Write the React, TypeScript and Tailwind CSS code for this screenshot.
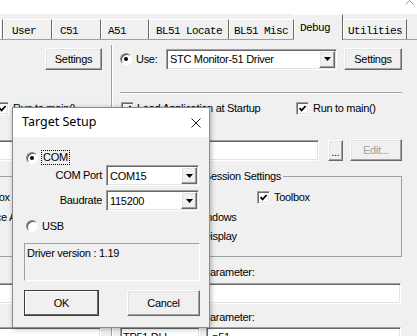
import React from 'react';

const raised =
  'border border-t-white border-l-white border-r-[#696969] border-b-[#696969] bg-[#f0f0f0] shadow-[inset_-1px_-1px_0_#a0a0a0,inset_1px_1px_0_#e3e3e3]';
const sunken =
  'border border-t-[#a0a0a0] border-l-[#a0a0a0] border-r-white border-b-white bg-white shadow-[inset_1px_1px_0_#696969,inset_-1px_-1px_0_#e3e3e3]';

const Check = () => (
  <span className={`flex h-[13px] w-[13px] shrink-0 items-center justify-center ${sunken}`}>
    <svg width="9" height="9" viewBox="0 0 9 9">
      <path d="M1.5 4.2 L3.6 6.4 L7.6 2" stroke="#000" strokeWidth="1.7" fill="none" />
    </svg>
  </span>
);

const Radio: React.FC<{ on?: boolean }> = ({ on }) => (
  <span className="flex h-[12px] w-[12px] shrink-0 items-center justify-center rounded-full border border-t-[#8a8a8a] border-l-[#8a8a8a] border-r-white border-b-white bg-white shadow-[inset_1px_1px_0_#505050]">
    {on && <span className="h-[4px] w-[4px] rounded-full bg-black" />}
  </span>
);

const Arrow = () => (
  <span className={`mr-[1px] flex h-[17px] w-[16px] shrink-0 items-center justify-center ${raised}`}>
    <svg width="7" height="4" viewBox="0 0 7 4">
      <path d="M0 0 H7 L3.5 4 Z" fill="#000" />
    </svg>
  </span>
);

const Combo: React.FC<{ value: string; width: string }> = ({ value, width }) => (
  <div className={`flex h-[21px] items-center ${width} ${sunken}`}>
    <span className="flex-1 pl-[3px] leading-[14px]">{value}</span>
    <Arrow />
  </div>
);

const tabs = [
  { label: '', cls: 'w-[3px]' },
  { label: 'User', cls: 'w-[49px] pl-[8px]' },
  { label: 'C51', cls: 'w-[49px] pl-[7px]' },
  { label: 'A51', cls: 'w-[48px] pl-[6px]' },
  { label: 'BL51 Locate', cls: 'w-[80px] pl-[6px]' },
  { label: 'BL51 Misc', cls: 'w-[65px] pl-[4px]' },
  { label: 'Debug', cls: 'w-[49px] pl-[5px]', active: true },
  { label: 'Utilities', cls: 'w-[64px] pl-[4px]' },
];

const TabStrip = () => (
  <div className="flex h-[26px] items-end border-b border-[#a0a0a0] font-['Liberation_Mono',monospace] text-[11px] tracking-[-0.6px]">
    {tabs.map((t, i) =>
      t.active ? (
        <div
          key={i}
          className={`relative -mb-px h-[26px] shrink-0 border-x border-t border-t-white border-l-white border-r-[#696969] bg-[#f0f0f0] pt-[7px] leading-[12px] ${t.cls}`}
        >
          {t.label}
        </div>
      ) : (
        <div
          key={i}
          className={`h-[20px] shrink-0 border-x border-t border-t-white border-l-white border-r-[#696969] pt-[5px] leading-[12px] ${t.cls}`}
        >
          {t.label}
        </div>
      )
    )}
  </div>
);

const DebugColumn: React.FC<{ sim?: boolean }> = ({ sim }) => (
  <div className={sim ? '-ml-[184px] w-[286px] shrink-0' : 'w-[286px] shrink-0'}>
    {sim ? (
      <div className="mt-[8px] flex h-[22px] items-center pl-[4px]">
        <Radio />
        <span className="ml-[4px]">Use Simulator</span>
        <button className={`ml-auto h-[22px] w-[57px] ${raised}`}>Settings</button>
      </div>
    ) : (
      <div className="mt-[8px] flex h-[22px] items-center pl-[4px]">
        <Radio on />
        <span className="ml-[4px] w-[30px]">Use:</span>
        <div className={`flex h-[21px] w-[171px] items-center ${sunken}`}>
          <span className="flex-1 pl-[3px] leading-[14px]">STC Monitor-51 Driver</span>
          <Arrow />
        </div>
        <button className={`ml-[7px] h-[22px] w-[58px] ${raised}`}>Settings</button>
      </div>
    )}

    {sim ? (
      <div className="mt-[22px] h-[2px]" />
    ) : (
      <div className="mt-[22px] ml-[4px] h-[2px] border-t border-b border-t-[#a0a0a0] border-b-white" />
    )}

    <div className="mt-[8px] flex h-[13px] items-center pl-[5px]">
      <div className="flex w-[175px] items-center gap-[3px]">
        <Check />
        <span className="leading-[13px]">Load Application at Startup</span>
      </div>
      <div className="flex items-center gap-[4px]">
        <Check />
        <span className="leading-[13px]">Run to main()</span>
      </div>
    </div>

    <div className="mt-[4px] h-[14px] pl-[4px] leading-[14px]">Initialization File:</div>

    <div className="mt-[7px] flex h-[21px] items-start pl-[4px]">
      <div className={`h-[21px] w-[199px] ${sunken}`} />
      <button className={`ml-[9px] h-[21px] w-[15px] pt-[3px] leading-[12px] ${raised}`}>...</button>
      <button className={`-mt-px ml-[7px] h-[22px] w-[52px] text-[#a0a0a0] ${raised}`}>Edit...</button>
    </div>

    <fieldset className="mt-[8px] ml-[9px] h-[88px] w-[277px] border border-[#a0a0a0]">
      <legend className="ml-[3px] px-[2px] leading-[14px]">Restore Debug Session Settings</legend>
      <div className="mt-[8px] flex h-[13px] items-center pl-[9px]">
        <div className="flex w-[122px] items-center gap-[4px]">
          <Check />
          <span className="leading-[13px]">Breakpoints</span>
        </div>
        <div className="flex items-center gap-[4px]">
          <Check />
          <span className="leading-[13px]">Toolbox</span>
        </div>
      </div>
      <div className={sim ? 'mt-[7px] flex h-[13px] items-center gap-[4px] pl-[17px]' : 'mt-[7px] flex h-[13px] items-center gap-[4px] pl-[19px]'}>
        <Check />
        <span className="leading-[13px]">{sim ? 'Watch Windows & Performance Analyzer' : 'Watch Windows'}</span>
      </div>
      <div className={sim ? 'mt-[6px] flex h-[13px] items-center gap-[4px] pl-[17px]' : 'mt-[6px] flex h-[13px] items-center gap-[4px] pl-[19px]'}>
        <Check />
        <span className="leading-[13px]">Memory Display</span>
      </div>
    </fieldset>

    <div className="mt-[8px] flex h-[14px] pl-[4px] leading-[14px]">
      <span className="w-[83px]">{sim ? 'CPU DLL:' : 'Driver DLL:'}</span>
      <span>Parameter:</span>
    </div>
    <div className="mt-[4px] flex pl-[4px]">
      <div className={`h-[21px] w-[80px] pl-[2px] leading-[19px] ${sunken}`}>S8051.DLL</div>
      <div className={`ml-[6px] h-[21px] w-[195px] ${sunken}`} />
    </div>

    <div className="mt-[6px] flex h-[14px] pl-[4px] leading-[14px]">
      <span className="w-[83px]">Dialog DLL:</span>
      <span>Parameter:</span>
    </div>
    <div className="mt-[3px] flex pl-[4px]">
      <div className={`h-[21px] w-[80px] pl-[2px] leading-[19px] ${sunken}`}>{sim ? 'DP51.DLL' : 'TP51.DLL'}</div>
      <div className={`ml-[6px] h-[21px] w-[195px] pl-[2px] leading-[19px] ${sunken}`}>-p51</div>
    </div>
  </div>
);

const TargetSetup = () => (
  <div className="absolute left-[12px] top-[107px] flex h-[221px] w-[198px] flex-col border border-[#8c8c8c] bg-[#f0f0f0] shadow-[1px_1px_5px_rgba(0,0,0,0.3)]">
    <div className="flex h-[29px] shrink-0 items-center bg-white pl-[9px] font-['Noto_Sans',sans-serif] text-[12.5px] tracking-normal">
      <span>Target Setup</span>
      <svg className="mr-[8px] ml-auto" width="10" height="10" viewBox="0 0 10 10">
        <path d="M0.5 0.5 L9.5 9.5 M9.5 0.5 L0.5 9.5" stroke="#222" strokeWidth="1" />
      </svg>
    </div>

    <div className="flex flex-col pl-[11px]">
      <div className="mt-[13px] flex h-[15px] items-center">
        <span className="ml-[2px]">
          <Radio on />
        </span>
        <span className="ml-[3px] h-[15px] border border-dotted border-black px-[1px] leading-[13px]">COM</span>
      </div>

      <div className="flex h-[21px] items-center">
        <span className="w-[78px] text-right">COM Port</span>
        <span className="ml-[4px]">
          <Combo value="COM15" width="w-[93px]" />
        </span>
      </div>

      <div className="mt-[4px] flex h-[21px] items-center">
        <span className="w-[78px] text-right">Baudrate</span>
        <span className="ml-[4px]">
          <Combo value="115200" width="w-[93px]" />
        </span>
      </div>

      <div className="mt-[8px] flex h-[14px] items-center">
        <span className="ml-[2px]">
          <Radio />
        </span>
        <span className="ml-[4px] leading-[14px]">USB</span>
      </div>

      <div className="mt-[10px] h-[38px] w-[176px] border border-t-[#a0a0a0] border-l-[#a0a0a0] border-r-white border-b-white pl-[2px] pt-[2px] leading-[14px]">
        Driver version : 1.19
      </div>

      <div className="mt-[9px] flex">
        <button className="h-[26px] w-[75px] border border-[#3c3c3c] bg-[#f0f0f0] shadow-[inset_-1px_-1px_0_#696969,inset_1px_1px_0_#ffffff]">
          OK
        </button>
        <button className={`ml-[28px] h-[26px] w-[73px] ${raised}`}>Cancel</button>
      </div>
    </div>
  </div>
);

export default function App() {
  return (
    <div className="relative h-[336px] w-[417px] overflow-hidden whitespace-nowrap bg-[#f0f0f0] font-['Liberation_Sans',Arial,sans-serif] text-[11px] tracking-[-0.3px] text-black">
      <div className="relative h-[14px] bg-white">
        <svg className="absolute top-0 right-0" width="12" height="14" viewBox="0 0 12 14">
          <path d="M0.5 -3.5 L8.5 4.5 M8.5 -3.5 L0.5 4.5" stroke="#9a9a9a" strokeWidth="1" />
        </svg>
      </div>

      <TabStrip />

      <div className="flex h-[296px]">
        <DebugColumn sim />
        <div className="mt-[5px] ml-[9px] mr-[3px] w-[2px] shrink-0 border-l border-[#a0a0a0] bg-white" />
        <DebugColumn />
      </div>

      <TargetSetup />
    </div>
  );
}
